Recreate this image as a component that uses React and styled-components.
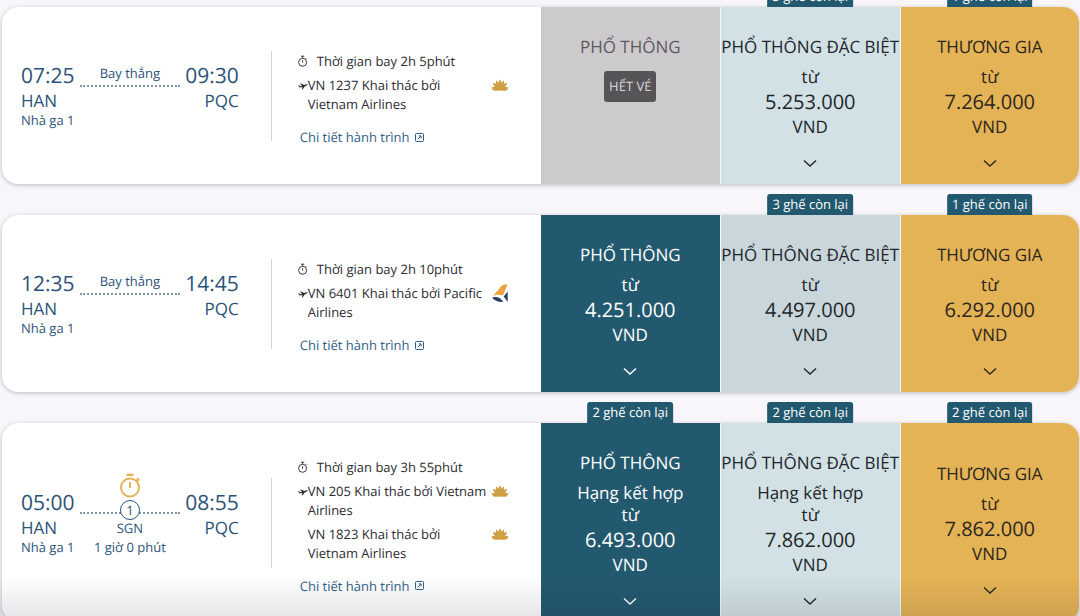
import { useState } from "react";
import styled, { createGlobalStyle } from "styled-components";

const GlobalStyle = createGlobalStyle`
  * {
    box-sizing: border-box;
  }

  html {
    background: #f8f6fa;
  }

  body {
    margin: 0;
    height: 100vh;
    overflow: hidden;
    font-family: "Open Sans", "Noto Sans", sans-serif;
    font-size: 13px;
    color: #2b2b30;
    text-rendering: geometricPrecision;
  }
`;

const FARE_COLORS = {
  soldOut: { background: "#cdcace", color: "#5b5a5e" },
  economy: { background: "#23596f", color: "#ffffff" },
  premium: { background: "#d1e1e5", color: "#222529" },
  premiumDark: { background: "#c9d6db", color: "#222529" },
  business: { background: "#e4b355", color: "#2b2620" },
};

const FLIGHTS = [
  {
    id: "VN1237",
    depart: "07:25",
    arrive: "09:30",
    duration: "2h 5phút",
    legs: [{ text: "VN 1237 Khai thác bởi Vietnam Airlines", airline: "lotus" }],
    fares: [
      { name: "PHỔ THÔNG", type: "soldOut" },
      { name: "PHỔ THÔNG ĐẶC BIỆT", type: "premium", price: "5.253.000", seats: 3 },
      { name: "THƯƠNG GIA", type: "business", price: "7.264.000", seats: 1 },
    ],
  },
  {
    id: "VN6401",
    depart: "12:35",
    arrive: "14:45",
    duration: "2h 10phút",
    legs: [{ text: "VN 6401 Khai thác bởi Pacific Airlines", airline: "pacific" }],
    fares: [
      { name: "PHỔ THÔNG", type: "economy", price: "4.251.000" },
      { name: "PHỔ THÔNG ĐẶC BIỆT", type: "premiumDark", price: "4.497.000", seats: 3 },
      { name: "THƯƠNG GIA", type: "business", price: "6.292.000", seats: 1 },
    ],
  },
  {
    id: "VN205",
    depart: "05:00",
    arrive: "08:55",
    duration: "3h 55phút",
    stop: { code: "SGN", time: "1 giờ 0 phút" },
    legs: [
      { text: "VN 205 Khai thác bởi Vietnam Airlines", airline: "lotus" },
      { text: "VN 1823 Khai thác bởi Vietnam Airlines", airline: "lotus" },
    ],
    fares: [
      { name: "PHỔ THÔNG", type: "economy", price: "6.493.000", seats: 2, mixed: true },
      { name: "PHỔ THÔNG ĐẶC BIỆT", type: "premium", price: "7.862.000", seats: 2, mixed: true },
      { name: "THƯƠNG GIA", type: "business", price: "7.862.000", seats: 2 },
    ],
  },
];

const Page = styled.main`
  position: relative;
  height: 100vh;
  overflow: hidden;
`;

const FlightList = styled.div`
  display: flex;
  flex-direction: column;
  gap: 31px;
  padding: 7px 1px 0 2px;
`;

const BottomShade = styled.div`
  position: absolute;
  left: 0;
  right: 0;
  bottom: 0;
  height: 40px;
  background: linear-gradient(rgba(20, 20, 40, 0), rgba(20, 20, 40, 0.1));
  pointer-events: none;
`;

const Card = styled.article`
  display: grid;
  grid-template-columns: 3fr 1fr 1fr 1fr;
  background: #ffffff;
  border-radius: 16px;
  box-shadow: 0 1px 4px rgba(40, 30, 50, 0.28);
`;

const Info = styled.div`
  display: flex;
  align-items: center;
`;

const Route = styled.div`
  flex: 1 1 50%;
  display: flex;
  align-items: flex-start;
  padding: 0 32px 0 19px;
  color: #2c5378;
`;

const Airport = styled.div`
  display: flex;
  flex-direction: column;
  min-height: 68px;
  text-align: ${({ $end }) => ($end ? "right" : "left")};
`;

const Time = styled.span`
  font-size: 21px;
  line-height: 28px;
`;

const Code = styled.span`
  font-size: 17px;
  line-height: 22px;
`;

const Terminal = styled.span`
  font-size: 13px;
  line-height: 16px;
`;

const Path = styled.div`
  flex: 1;
  margin: 0 5px;
  text-align: center;
  white-space: nowrap;
`;

const PathLabel = styled.div`
  height: 23px;
  line-height: 22px;
`;

const PathLine = styled.div`
  position: relative;
  border-top: 2px dotted #8195a8;
`;

const StopMark = styled.div`
  position: absolute;
  left: 50%;
  bottom: -6px;
  transform: translateX(-50%);
  display: flex;
  flex-direction: column;
  align-items: center;
  gap: 2px;
`;

const StopCount = styled.span`
  width: 20px;
  height: 20px;
  border: 1px solid #2c5378;
  border-radius: 50%;
  background: #ffffff;
  line-height: 18px;
`;

const StopInfo = styled.div`
  padding-top: 5px;
  line-height: 19px;
`;

const Divider = styled.div`
  width: 1px;
  height: 90px;
  background: #d3d3dd;
`;

const Details = styled.div`
  flex: 1 1 50%;
  padding: 7px 32px 0 26px;
`;

const Duration = styled.div`
  display: flex;
  align-items: center;
  gap: 9px;
  line-height: 20px;
`;

const Legs = styled.div`
  display: flex;
  flex-direction: column;
  gap: 5px;
  margin: 5px 0 13px;
`;

const Leg = styled.div`
  display: grid;
  grid-template-columns: 10px 1fr 18px;
  line-height: 19px;

  svg {
    display: block;
    height: 19px;
  }
`;

const LegText = styled.span`
  grid-column: 2;
  padding-right: 2px;
`;

const DetailsLink = styled.a`
  display: inline-flex;
  align-items: center;
  gap: 5px;
  margin-left: 2px;
  line-height: 20px;
  color: #2f6187;
  text-decoration: none;
  vertical-align: top;
`;

const FareCell = styled.div`
  position: relative;
  display: flex;

  & + & {
    border-left: 1px solid #f4f8f8;
  }
`;

const FareButton = styled.button`
  flex: 1;
  min-width: 0;
  min-height: 177px;
  display: flex;
  flex-direction: column;
  align-items: center;
  justify-content: ${({ disabled }) => (disabled ? "flex-start" : "center")};
  padding: 28px 0 13px;
  border: none;
  border-radius: ${({ $last }) => ($last ? "0 16px 16px 0" : "0")};
  background: ${({ $type }) => FARE_COLORS[$type].background};
  color: ${({ $type }) => FARE_COLORS[$type].color};
  font-family: inherit;
  font-size: 17px;
  line-height: 22px;
  text-rendering: inherit;
  white-space: nowrap;
  cursor: ${({ disabled }) => (disabled ? "default" : "pointer")};

  svg {
    margin-top: 17px;
  }
`;

const FareName = styled.span`
  margin-bottom: 7px;
  line-height: 24px;
`;

const Price = styled.span`
  font-size: 20px;
  line-height: 28px;
`;

const SoldOut = styled.span`
  margin-top: 5px;
  padding: 0 5px;
  border-radius: 3px;
  background: #565457;
  color: #d9d7da;
  font-size: 13px;
  line-height: 31px;
`;

const SeatsLeft = styled.span`
  position: absolute;
  left: 50%;
  bottom: 100%;
  transform: translateX(-50%);
  padding: 0 5px;
  border-radius: 3px 3px 0 0;
  background: #23596f;
  color: #ffffff;
  font-size: 13px;
  line-height: 21px;
  white-space: nowrap;
`;

const StopwatchIcon = () => (
  <svg width="10" height="12" viewBox="0 0 10 12" fill="none" stroke="#3a3a3e" aria-hidden="true">
    <circle cx="4.6" cy="7.3" r="4" />
    <path d="M2.9 1.2h3.4M4.6 1.2v2M4.6 5.2v2.500M7.700 3.800l.9-.9" />
  </svg>
);

const GoldStopwatchIcon = () => (
  <svg width="22" height="25" viewBox="0 0 22 25" fill="none" stroke="#e4b355" aria-hidden="true">
    <circle cx="11" cy="14.5" r="9" strokeWidth="2" />
    <path d="M7.5 1.8h7" strokeWidth="2.4" />
    <path d="M11 9v6M17.2 8.2l2-2" strokeWidth="2" />
    <path d="M18 5l2.5 2.5" strokeWidth="1.6" />
  </svg>
);

const PlaneIcon = () => (
  <svg width="10" viewBox="0 0 10 19" fill="#2f2f33" aria-hidden="true">
    <path d="M0 9.6l.9-.3 1.400.9 1.700-.4L2 7.700l1-.3 3.300 1.600 1.800-.7c.7-.3 1.400-.2 1.500.2.1.4-.3.8-1 1.100l-1.900.8-1.900 2.800-1 .3.700-2.600-2.700.6z" />
  </svg>
);

const LotusIcon = () => (
  <svg width="18" viewBox="0 0 18 19" fill="#cf9f45" aria-hidden="true">
    <path d="M9 3.5c.9.8 1.4 2 1.600 3.400.6-1.100 1.300-1.800 2.200-2.300.4 1.200.4 2.300.1 3.500.8-.8 1.700-1.200 2.900-1.300 0 1.700-.6 3.100-1.600 4.300 1.400-.3 2.700-.1 3.800.6-.8.3-1.200.8-1.600 1.400.3.400.1.9-.5 1.100-2.200.9-4.700.7-6.900.2-2.200.5-4.700.7-6.900-.2-.6-.2-.8-.7-.5-1.100-.4-.6-.8-1.100-1.600-1.400 1.100-.7 2.400-.9 3.800-.6-1-1.200-1.600-2.600-1.600-4.300 1.200.1 2.100.5 2.900 1.300-.3-1.200-.3-2.300.1-3.500.9.500 1.600 1.200 2.200 2.300C7.600 5.500 8.100 4.300 9 3.500z" />
  </svg>
);

const PacificIcon = () => (
  <svg width="18" viewBox="0 0 18 19" aria-hidden="true">
    <path d="M16.5 .3C12.5.2 10.5 1.500 8.700 4L2.200 12c3.500-1.800 6.500-1.600 9.800-.6z" fill="#f0a33c" />
    <path d="M1 13.500c3.800-1.300 8-.6 11.500 4.300-4.500.5-9-.8-11.500-4.300z" fill="#2a3c68" />
    <path d="M16.700 7.500v10.500l-4-5.500z" fill="#2a3c68" />
  </svg>
);

const ExternalIcon = () => (
  <svg width="9" height="9" viewBox="0 0 9 9" fill="none" stroke="currentColor" aria-hidden="true">
    <rect x="0.5" y="0.5" width="8" height="8" rx="0.8" />
    <path d="M2.7 6.300l3.300-3.300M3.700 2.900h2.400v2.400" />
  </svg>
);

const ChevronIcon = () => (
  <svg width="16" height="16" viewBox="0 0 16 16" fill="none" stroke="currentColor" strokeWidth="1.4" aria-hidden="true">
    <path d="M2 5.5l6 5.5 6-5.5" />
  </svg>
);

const Fare = ({ fare, last }) => {
  const [isOpen, setIsOpen] = useState(false);
  const soldOut = fare.type === "soldOut";

  return (
    <FareCell>
      {fare.seats ? <SeatsLeft>{fare.seats} ghế còn lại</SeatsLeft> : null}
      <FareButton
        type="button"
        $type={fare.type}
        $last={last}
        disabled={soldOut}
        aria-expanded={isOpen}
        onClick={() => setIsOpen((prev) => !prev)}
      >
        <FareName>{fare.name}</FareName>
        {soldOut ? (
          <SoldOut>HẾT VÉ</SoldOut>
        ) : (
          <>
            {fare.mixed ? <span>Hạng kết hợp</span> : null}
            <span>từ</span>
            <Price>{fare.price}</Price>
            <span>VND</span>
            <ChevronIcon />
          </>
        )}
      </FareButton>
    </FareCell>
  );
};

const Flight = ({ flight }) => {
  const { id, depart, arrive, duration, stop, legs, fares } = flight;

  return (
    <Card>
      <Info>
        <Route>
          <Airport>
            <Time>{depart}</Time>
            <Code>HAN</Code>
            <Terminal>Nhà ga 1</Terminal>
          </Airport>
          <Path>
            <PathLabel>{stop ? null : "Bay thẳng"}</PathLabel>
            <PathLine>
              {stop ? (
                <StopMark>
                  <GoldStopwatchIcon />
                  <StopCount>1</StopCount>
                </StopMark>
              ) : null}
            </PathLine>
            {stop ? (
              <StopInfo>
                <div>{stop.code}</div>
                <div>{stop.time}</div>
              </StopInfo>
            ) : null}
          </Path>
          <Airport $end>
            <Time>{arrive}</Time>
            <Code>PQC</Code>
          </Airport>
        </Route>
        <Divider />
        <Details>
          <Duration>
            <StopwatchIcon />
            Thời gian bay {duration}
          </Duration>
          <Legs>
            {legs.map((leg, index) => (
              <Leg key={leg.text}>
                {index === 0 ? <PlaneIcon /> : null}
                <LegText>{leg.text}</LegText>
                {leg.airline === "lotus" ? <LotusIcon /> : <PacificIcon />}
              </Leg>
            ))}
          </Legs>
          <DetailsLink href={`#${id}`}>
            Chi tiết hành trình
            <ExternalIcon />
          </DetailsLink>
        </Details>
      </Info>
      {fares.map((fare, index) => (
        <Fare key={fare.name} fare={fare} last={index === fares.length - 1} />
      ))}
    </Card>
  );
};

export default function App() {
  return (
    <Page>
      <GlobalStyle />
      <FlightList>
        {FLIGHTS.map((flight) => (
          <Flight key={flight.id} flight={flight} />
        ))}
      </FlightList>
      <BottomShade />
    </Page>
  );
}
